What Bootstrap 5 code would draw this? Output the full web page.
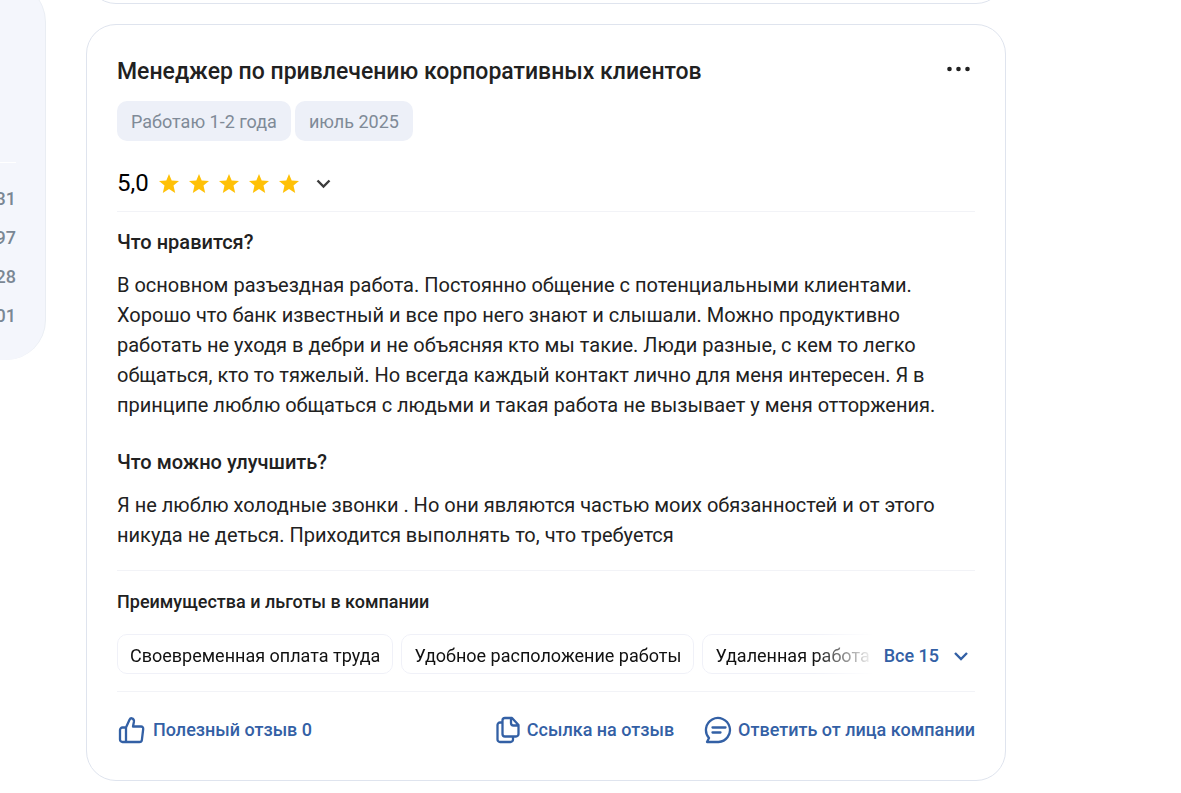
<!DOCTYPE html>
<html lang="ru">
<head>
<meta charset="utf-8">
<meta name="viewport" content="width=device-width, initial-scale=1">
<title>Отзывы о работе</title>
<link href="https://cdn.jsdelivr.net/npm/bootstrap@5.3.0/dist/css/bootstrap.min.css" rel="stylesheet">
<style>
  body { font-family: Roboto, "Noto Sans", sans-serif; color: #212121; background: #fff; overflow-x: hidden; }
  .stats-panel { width: 46px; margin-top: -18px; background: #f4f6fc; border-right: 1px solid #e9edf3; border-radius: 0 40px 40px 0; overflow: hidden; padding: 180px 29px 25px 0; flex: none; }
  .stats-panel ul { border-top: 1px solid #fff; padding-top: 16px; }
  .stats-panel li { display: flex; justify-content: flex-end; font-size: 18px; font-weight: 500; line-height: 39px; color: #7a8794; }
  .feed { min-width: 0; padding: 0 175px 0 40px; }
  .prev-slot { height: 4px; overflow: hidden; display: flex; align-items: flex-end; margin-bottom: 20px; }
  .review { border: 1px solid #dfe4ee; border-radius: 30px; background: #fff; }
  .prev-slot .review { height: 80px; flex: 0 0 100%; }
  .review-body { padding: 30px 30px 36px; }
  .review h2 { font-size: 23px; line-height: 34px; font-weight: 500; margin: 0; }
  .review h3 { font-size: 20px; line-height: 28px; font-weight: 500; margin: 0 0 14px; }
  .review h4 { font-size: 18px; line-height: 24px; font-weight: 500; margin: 0 0 20px; }
  .review p { font-size: 20px; line-height: 30px; margin: 0; }
  .tags { margin-top: 12px; }
  .tag-soft { background: #edf0f8; color: #7f8a97; font-size: 18px; line-height: 42px; padding: 0 14px; height: 40px; border-radius: 10px; }
  .rating { margin: 26px 0 12px; }
  .stars { gap: 10px; margin-left: 10px; }
  .rule { height: 1px; background: #f2f3f7; }
  .improve { padding: 28px 0 20px; }
  .perks { padding: 19px 0 17px; }
  .plain { background: none; border: 0; padding: 0; color: inherit; line-height: 1; }
  .score { font-size: 24px; line-height: 32px; color: #000; }
  .perk { border: 1px solid #f0f1f8; border-radius: 10px; font-size: 18px; line-height: 40px; height: 40px; padding: 1px 12px 0; color: #111; white-space: nowrap; flex: none; }
  .perk-strip { overflow: hidden; min-width: 0; margin-right: 10px; -webkit-mask-image: linear-gradient(to left, transparent 0, #000 60px); mask-image: linear-gradient(to left, transparent 0, #000 60px); }
  .show-all { gap: 14px; margin-right: 6px; padding-top: 4px; }
  .action { color: #3360a5; font-size: 18px; font-weight: 500; line-height: 24px; text-decoration: none; white-space: nowrap; }
  .links { gap: 30px; }
  .links a { gap: 6px; }
</style>
</head>
<body>
<div class="d-flex align-items-start">
  <aside class="stats-panel">
    <ul class="list-unstyled m-0">
      <li>31</li><li>97</li><li>28</li><li>01</li>
    </ul>
  </aside>
  <main class="feed flex-grow-1">
    <div class="prev-slot"><div class="review"></div></div>
    <article class="review">
      <div class="review-body">
        <header class="d-flex align-items-start justify-content-between">
          <h2>Менеджер по привлечению корпоративных клиентов</h2>
          <button class="plain d-flex pt-2 pe-1" type="button" aria-label="Меню">
            <svg width="26" height="12" viewBox="0 0 26 12" fill="#212121"><circle cx="4.500" cy="6" r="2.300"/><circle cx="13.500" cy="6" r="2.300"/><circle cx="22.500" cy="6" r="2.300"/></svg>
          </button>
        </header>
        <div class="d-flex gap-1 tags">
          <span class="tag-soft">Работаю 1-2 года</span>
          <span class="tag-soft">июль 2025</span>
        </div>
        <div class="d-flex align-items-center rating">
          <span class="score">5,0</span>
          <span class="d-flex stars">
            <svg width="20" height="20" viewBox="0 0 20 20" fill="#ffc107"><path id="star" d="M10 1l2.700 6.400 7.300.6-5.500 4.600 1.700 7.300L10 16.100l-6.200 3.800 1.700-7.300L0 8l7.300-.6z"/></svg>
            <svg width="20" height="20" viewBox="0 0 20 20" fill="#ffc107"><use href="#star"/></svg>
            <svg width="20" height="20" viewBox="0 0 20 20" fill="#ffc107"><use href="#star"/></svg>
            <svg width="20" height="20" viewBox="0 0 20 20" fill="#ffc107"><use href="#star"/></svg>
            <svg width="20" height="20" viewBox="0 0 20 20" fill="#ffc107"><use href="#star"/></svg>
          </span>
          <button class="plain d-flex ms-3" type="button" aria-label="Подробнее об оценке">
            <svg width="16" height="12" viewBox="0 0 16 12" fill="none" stroke="#3c3c3c" stroke-width="2.400"><path d="M2.500 3.500l6 6 6-6"/></svg>
          </button>
        </div>
        <div class="rule"></div>
        <section class="pt-3">
          <h3>Что нравится?</h3>
          <p>В основном разъездная работа. Постоянно общение с потенциальными клиентами. Хорошо что банк известный и все про него знают и слышали. Можно продуктивно работать не уходя в дебри и не объясняя кто мы такие. Люди разные, с кем то легко общаться, кто то тяжелый. Но всегда каждый контакт лично для меня интересен. Я в принципе люблю общаться с людьми и такая работа не вызывает у меня отторжения.</p>
        </section>
        <section class="improve">
          <h3>Что можно улучшить?</h3>
          <p>Я не люблю холодные звонки . Но они являются частью моих обязанностей и от этого никуда не деться. Приходится выполнять то, что требуется</p>
        </section>
        <div class="rule"></div>
        <section class="perks">
          <h4>Преимущества и льготы в компании</h4>
          <div class="d-flex align-items-center">
            <div class="perk-strip d-flex gap-2 flex-grow-1">
              <span class="perk">Своевременная оплата труда</span>
              <span class="perk">Удобное расположение работы</span>
              <span class="perk">Удаленная работа</span>
            </div>
            <button class="plain action show-all d-flex align-items-center" type="button">Все 15
              <svg width="16" height="12" viewBox="0 0 16 12" fill="none" stroke="#3360a5" stroke-width="2.400"><path d="M2 3l6 6 6-6"/></svg>
            </button>
          </div>
        </section>
        <div class="rule"></div>
        <footer class="d-flex align-items-center justify-content-between pt-4">
          <button class="plain action d-flex align-items-center gap-2" type="button">
            <svg width="28" height="28" viewBox="0 0 28 28" fill="none" stroke="#3360a5" stroke-width="2.300" stroke-linejoin="round"><path d="M9 11.500V26H5.500A2.500 2.500 0 0 1 3 23.500V14a2.500 2.500 0 0 1 2.500-2.500H9l3.500-7.700c.6-1.300 1.300-1.700 2.300-1.500 1.800.4 2.400 1.700 2.100 3.600L16 10.500h8c1.500 0 2.400 1 2.200 2.500l-1.300 10.800c-.2 1.400-1.100 2.200-2.500 2.200H9"/></svg>
            <span>Полезный отзыв 0</span>
          </button>
          <div class="d-flex align-items-center links">
            <a class="action d-flex align-items-center" href="#">
              <svg width="26" height="28" viewBox="0 0 26 28" fill="none" stroke="#3360a5" stroke-width="2.300" stroke-linejoin="round"><path d="M7.500 6.500H5A2.500 2.500 0 0 0 2.500 9v14.500A2.500 2.500 0 0 0 5 26h10.500a2.500 2.500 0 0 0 2.500-2.500V21M10 2h7l6.500 7v9a2.500 2.500 0 0 1-2.500 2.500H10A2.500 2.500 0 0 1 7.500 18V4.500A2.500 2.500 0 0 1 10 2zM16 2v5a2.500 2.500 0 0 0 2.500 2.500h5"/></svg>
              <span>Ссылка на отзыв</span>
            </a>
            <a class="action d-flex align-items-center" href="#">
              <svg width="28" height="28" viewBox="0 0 28 28" fill="none" stroke="#3360a5" stroke-width="2.300" stroke-linejoin="round" stroke-linecap="round"><path d="M3 26l2-4a12 12 0 1 1 9.500 4zM8.500 11.500h13M8.500 16.500h8"/></svg>
              <span>Ответить от лица компании</span>
            </a>
          </div>
        </footer>
      </div>
    </article>
  </main>
</div>
<script src="https://cdn.jsdelivr.net/npm/bootstrap@5.3.0/dist/js/bootstrap.bundle.min.js"></script>
</body>
</html>
